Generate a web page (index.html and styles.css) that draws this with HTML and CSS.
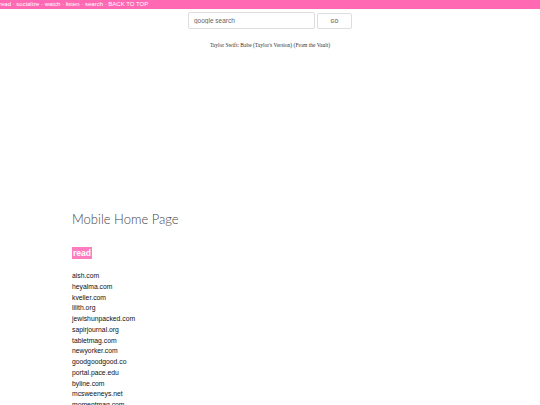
FILE: index.html
```html
<!DOCTYPE html>
<html>
<head>
<meta charset="utf-8">
<link rel="stylesheet" href="styles.css">
</head>
<body>
<nav class="topbar">read · socialize · watch · listen · search · BACK TO TOP</nav>
<form class="search">
  <input class="search-input" type="text" placeholder="google search">
  <button class="search-btn" type="button">GO</button>
</form>
<p class="song">Taylor Swift: Babe (Taylor's Version) (From the Vault)</p>
<main class="content">
  <h1 class="title">Mobile Home Page</h1>
  <h2 class="section"><span class="tag">read</span></h2>
  <ul class="links">
    <li>aish.com</li>
    <li>heyalma.com</li>
    <li>kveller.com</li>
    <li>lilith.org</li>
    <li>jewishunpacked.com</li>
    <li>sapirjournal.org</li>
    <li>tabletmag.com</li>
    <li>newyorker.com</li>
    <li>goodgoodgood.co</li>
    <li>portal.pace.edu</li>
    <li>byline.com</li>
    <li>mcsweeneys.net</li>
    <li>momentmag.com</li>
  </ul>
</main>
</body>
</html>
```
FILE: styles.css
```css
html, body { margin: 0; padding: 0; background: #fff; }
body { font-family: "Liberation Sans", Arial, sans-serif; overflow: hidden; }
.topbar {
  background: #ff69b4;
  color: #fff;
  font-size: 6px;
  line-height: 9px;
  height: 9px;
  margin-left: -1px;
  white-space: nowrap;
}
.search {
  display: flex;
  justify-content: center;
  gap: 2px;
  margin-top: 3px;
}
.search-input {
  box-sizing: border-box;
  width: 127px;
  height: 17px;
  border: 1px solid #ddd;
  border-radius: 2px;
  padding: 0 5px;
  font-family: "Liberation Sans", Arial, sans-serif;
  font-size: 6.5px;
  color: #555;
  margin: 0;
}
.search-input::placeholder { color: #666; }
.search-btn {
  box-sizing: border-box;
  width: 35px;
  height: 16px;
  margin: 1px 0 0 0;
  border: 1px solid #ddd;
  border-radius: 2px;
  background: #fff;
  font-family: "Liberation Sans", Arial, sans-serif;
  font-size: 5px;
  font-weight: bold;
  color: #777;
  padding: 0;
}
.song {
  font-family: "Liberation Serif", "Times New Roman", serif;
  font-size: 5.5px;
  color: #333;
  text-align: center;
  margin: 13px 0 0 0;
  line-height: 7px;
}
.content { padding-left: 72px; margin-top: 162px; }
.title {
  font-family: Lato, sans-serif;
  font-weight: 300;
  font-size: 13px;
  color: #444;
  margin: 0;
  line-height: 16px;
}
.section { margin: 21px 0 0 0; line-height: 11px; font-size: 8.5px; }
.tag {
  background: #ff7cbf;
  color: #fff;
  font-weight: bold;
  padding: 1px 1px;
}
.links {
  list-style: none;
  margin: 12px 0 0 0;
  padding: 0;
  font-size: 6.8px;
  color: #111;
}
.links li { line-height: 10.75px; }
```
